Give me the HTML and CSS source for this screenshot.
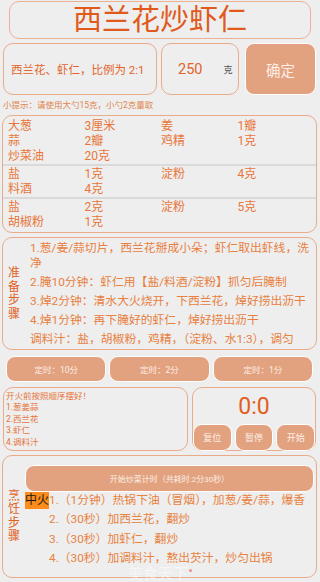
FILE: index.html
```html
<!DOCTYPE html>
<html lang="zh">
<head>
<meta charset="utf-8">
<title>西兰花炒虾仁</title>
<link rel="stylesheet" href="styles.css">
</head>
<body>
<div class="page">
  <div class="title">西兰花炒虾仁</div>

  <div class="inputs">
    <div class="field dish">西兰花、虾仁，比例为 2:1</div>
    <div class="field weight"><span class="num">250</span><span class="unit">克</span></div>
    <button class="btn confirm">确定</button>
  </div>

  <div class="tip">小提示：请使用大勺15克，小勺2克量取</div>

  <div class="box ingredients">
    <div class="grid">
      <span>大葱</span><span>3厘米</span><span>姜</span><span>1瓣</span>
      <span>蒜</span><span>2瓣</span><span>鸡精</span><span>1克</span>
      <span>炒菜油</span><span>20克</span><span></span><span></span>
    </div>
    <div class="divider"></div>
    <div class="grid">
      <span>盐</span><span>1克</span><span>淀粉</span><span>4克</span>
      <span>料酒</span><span>4克</span><span></span><span></span>
    </div>
    <div class="divider"></div>
    <div class="grid">
      <span>盐</span><span>2克</span><span>淀粉</span><span>5克</span>
      <span>胡椒粉</span><span>1克</span><span></span><span></span>
    </div>
  </div>

  <div class="box prep">
    <div class="label">准<br>备<br>步<br>骤</div>
    <div class="list">
      <p>1.葱/姜/蒜切片，西兰花掰成小朵；虾仁取出虾线，洗净</p>
      <p>2.腌10分钟：虾仁用【盐/料酒/淀粉】抓匀后腌制</p>
      <p>3.焯2分钟：清水大火烧开，下西兰花，焯好捞出沥干</p>
      <p>4.焯1分钟：再下腌好的虾仁，焯好捞出沥干</p>
      <p>调料汁：盐，胡椒粉，鸡精，（淀粉、水1:3），调匀</p>
    </div>
  </div>

  <div class="timers">
    <button class="btn">定时：10分</button>
    <button class="btn">定时：2分</button>
    <button class="btn">定时：1分</button>
  </div>

  <div class="row">
    <div class="box order">
      <div>开火前按照顺序摆好！</div>
      <div>1.葱姜蒜</div>
      <div>2.西兰花</div>
      <div>3.虾仁</div>
      <div>4.调料汁</div>
    </div>
    <div class="box clock">
      <div class="time">0:0</div>
      <div class="ctrls">
        <button class="btn">复位</button>
        <button class="btn">暂停</button>
        <button class="btn">开始</button>
      </div>
    </div>
  </div>

  <div class="box cook">
    <div class="label">烹<br>饪<br>步<br>骤</div>
    <div class="cook-main">
      <button class="btn start">开始炒菜计时（共耗时:2分30秒）</button>
      <div class="cook-steps">
        <span class="fire">中火</span>
        <div class="cook-list">
          <div>1.（1分钟）热锅下油（冒烟），加葱/姜/蒜，爆香</div>
          <div>2.（30秒）加西兰花，翻炒</div>
          <div>3.（30秒）加虾仁，翻炒</div>
          <div>4.（30秒）加调料汁，熬出芡汁，炒匀出锅</div>
        </div>
      </div>
    </div>
  </div>

  <div class="watermark">美食天下<span class="dot"></span></div>
</div>
</body>
</html>
```

FILE: styles.css
```css
html, body {
  margin: 0;
  padding: 0;
  background: #eeeeee;
}

body {
  font-family: Roboto, "Noto Sans CJK SC", sans-serif;
}

.page {
  position: relative;
  width: 320px;
  height: 582px;
  overflow: hidden;
  display: flex;
  flex-direction: column;
}

.box {
  box-sizing: border-box;
  border: 1px solid #e9ab8a;
  border-radius: 10px;
}

.btn {
  box-sizing: border-box;
  background: #e3a27f;
  border: 1px solid #ffffff;
  border-radius: 9px;
  color: #fbeee6;
  font-family: inherit;
  padding: 0;
  margin: 0;
  display: flex;
  align-items: center;
  justify-content: center;
}

/* title */
.title {
  box-sizing: border-box;
  margin: 1px 9px 0 9px;
  height: 38px;
  border: 1px solid #eab192;
  border-radius: 10px;
  display: flex;
  align-items: center;
  justify-content: center;
  font-size: 29px;
  line-height: 1;
  color: #e05a1b;
}

/* inputs */
.inputs {
  display: flex;
  height: 52px;
  margin: 4px 0 0 3px;
  gap: 4px;
}

.field {
  box-sizing: border-box;
  border: 1px solid #e9ab8a;
  border-radius: 10px;
  display: flex;
  align-items: center;
}

.dish {
  width: 154px;
  padding-left: 7px;
  font-size: 11.5px;
  color: #e3642a;
}

.weight {
  width: 78px;
  padding-left: 16px;
}

.num {
  font-size: 14.5px;
  color: #e0642a;
}

.unit {
  margin-left: 21px;
  font-size: 9px;
  color: #555555;
}

.confirm {
  width: 71px;
  height: 52px;
  margin-left: 2px;
  font-size: 14.5px;
}

/* tip */
.tip {
  margin: 4px 0 0 3px;
  height: 12px;
  font-size: 8.5px;
  line-height: 12px;
  color: #e0844c;
}

/* ingredients */
.ingredients {
  margin: 4px 3px 0 2px;
  padding: 3px 0 2px 0;
}

.grid {
  display: grid;
  grid-template-columns: repeat(4, 1fr);
  padding: 0 2px 0 5px;
  font-size: 12px;
  line-height: 15px;
  color: #e8763a;
}

.divider {
  height: 2px;
  background: #dadada;
  margin-bottom: 1px;
}

/* labels */
.label {
  flex: none;
  width: 12px;
  padding-left: 5px;
  font-size: 12px;
  line-height: 13.5px;
  color: #e0601c;
  text-align: center;
}

/* prep steps */
.prep {
  margin: 4px 3px 0 2px;
  padding: 3px 1px 2px 0;
  display: flex;
  align-items: center;
}

.prep .label {
  margin-right: 10px;
}

.list {
  flex: 1;
  display: flex;
  flex-direction: column;
  gap: 4px;
  font-size: 11.8px;
  line-height: 15px;
  color: #e8803f;
}

.list p {
  margin: 0;
}

/* timer buttons */
.timers {
  display: flex;
  gap: 3px;
  height: 26px;
  margin: 6px 7px 0 6px;
}

.timers .btn {
  flex: 1;
  font-size: 8.5px;
}

/* order + clock */
.row {
  display: flex;
  gap: 4px;
  height: 64px;
  margin: 5px 0 0 3px;
}

.order {
  width: 185px;
  padding: 2.5px 2px;
  font-size: 8.5px;
  line-height: 11.5px;
  color: #e6733a;
}

.clock {
  width: 124px;
  display: flex;
  flex-direction: column;
}

.time {
  flex: 1;
  display: flex;
  align-items: center;
  justify-content: center;
  font-size: 23px;
  color: #e0601c;
  padding-top: 1px;
}

.ctrls {
  display: flex;
  gap: 3px;
  height: 27px;
  margin-bottom: -1px;
}

.ctrls .btn {
  flex: 1;
  font-size: 9px;
}

/* cooking */
.cook {
  margin: 4px 3px 0 2px;
  padding: 9px 0 8px 0;
  display: flex;
  align-items: center;
}

.cook .label {
  margin-right: 5px;
}

.cook-main {
  flex: 1;
  display: flex;
  flex-direction: column;
  padding-right: 2px;
}

.start {
  height: 27px;
  font-size: 8px;
}

.cook-steps {
  display: flex;
  align-items: flex-start;
}

.fire {
  flex: none;
  width: 24px;
  height: 17px;
  background: #fd8c1a;
  color: #1a1a1a;
  font-size: 12px;
  line-height: 17px;
}

.cook-list {
  margin-top: -1.5px;
  font-size: 11.8px;
  line-height: 19.5px;
  color: #e8823f;
  white-space: nowrap;
}

.watermark {
  position: absolute;
  left: 128px;
  top: 567px;
  font-size: 15px;
  line-height: 14px;
  color: rgba(255, 255, 255, 0.5);
}

.dot {
  position: absolute;
  right: -4px;
  top: 2px;
  width: 3px;
  height: 3px;
  border-radius: 50%;
  background: rgba(240, 100, 100, 0.7);
}
```
